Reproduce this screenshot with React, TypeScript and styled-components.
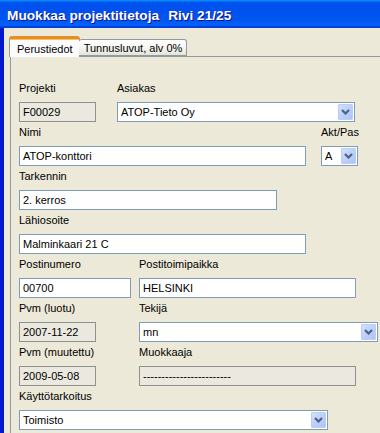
import React from "react";
import styled, { createGlobalStyle, css } from "styled-components";

const GlobalStyle = createGlobalStyle`
  html, body { margin: 0; padding: 0; overflow: hidden; background: #ECE9D8; }
  body { font-family: "Liberation Sans", Arial, sans-serif; }
`;

const Window = styled.div`
  width: 380px;
  height: 433px;
  display: flex;
  flex-direction: column;
  overflow: hidden;
`;

const TitleBar = styled.div`
  height: 28px;
  flex: none;
  display: flex;
  align-items: center;
  gap: 9px;
  padding: 2px 0 0 7px;
  box-sizing: border-box;
  background: linear-gradient(
    180deg,
    #0997ff 0%,
    #0053ee 9%,
    #0050ee 40%,
    #0058f0 75%,
    #0062fa 88%,
    #005bff 92%,
    #003dd7 95%,
    #003dd7 100%
  );
`;

const TitleText = styled.span`
  color: #fff;
  font-family: "Liberation Sans", Arial, sans-serif;
  font-weight: bold;
  font-size: 13.7px;
  white-space: nowrap;
  text-shadow: 1px 1px #0f1089;
`;

const Body = styled.div`
  flex: 1;
  display: flex;
  flex-direction: column;
  background: #ece9d8;
  border-left: 4px solid #0a46d8;
  border-image: linear-gradient(90deg, #0019cf 0%, #1360ef 35%, #0a5ae8 65%, #0845d6 100%) 1;
  padding: 8px 0 0 6px;
  font-size: 11px;
  color: #000;
`;

const TabStrip = styled.div`
  display: flex;
  align-items: flex-end;
  margin-left: -1px;
  position: relative;
  z-index: 1;
  margin-bottom: -1px;
`;

const Tab = styled.div<{ $active?: boolean }>`
  box-sizing: border-box;
  display: flex;
  align-items: center;
  white-space: nowrap;
  border: 1px solid #919b9c;
  border-top-left-radius: 3px;
  border-top-right-radius: 3px;
  ${(p) =>
    p.$active
      ? css`
          height: 21px;
          padding: 2px 6px 0 7px;
          border-bottom: none;
          border-top: 3px solid #e68b2c;
          box-shadow: inset 0 1px 0 #f7c64a;
          background: #fcfcfe;
        `
      : css`
          height: 17px;
          padding: 0 4px 0 5px;
          margin-left: -1px;
          margin-bottom: 1px;
          border-left: none;
          background: linear-gradient(180deg, #ffffff 0%, #f3f3ef 60%, #e4e3da 100%);
        `}
`;

const Panel = styled.div`
  flex: 1;
  border: 1px solid #919b9c;
  border-right: none;
  border-bottom: none;
  padding: 21px 0 0 8px;
  display: flex;
  flex-direction: column;
  background: #ece9d8;
`;

const Row = styled.div<{ $gap?: number }>`
  display: flex;
  gap: ${(p) => p.$gap ?? 0}px;
`;

const Field = styled.div<{ $w: number }>`
  width: ${(p) => p.$w}px;
  flex: none;
  display: flex;
  flex-direction: column;
`;

const Label = styled.div`
  height: 24px;
  box-sizing: border-box;
  padding-top: 3px;
  line-height: 14px;
  white-space: nowrap;
`;

const Box = styled.div<{ $disabled?: boolean }>`
  position: relative;
  height: 20px;
  box-sizing: border-box;
  border: 1px solid ${(p) => (p.$disabled ? "#8f9090" : "#7f9db9")};
  background: ${(p) => (p.$disabled ? "#ebe9df" : "#ffffff")};
  display: flex;
  align-items: center;
  padding-left: 3px;
  white-space: nowrap;
  overflow: hidden;
  line-height: 14px;
`;

const DropButton = styled.div`
  position: absolute;
  right: 1px;
  top: 1px;
  bottom: 1px;
  width: 15px;
  box-sizing: border-box;
  border: 1px solid #bccdf5;
  border-radius: 1px;
  background: linear-gradient(135deg, #d4e1fd 0%, #bfd1fb 45%, #afc4f4 100%);
  display: flex;
  align-items: center;
  justify-content: center;
`;

const Chevron = () => (
  <svg width="9" height="6" viewBox="0 0 9 6">
    <polyline points="1,1 4.5,4.5 8,1" fill="none" stroke="#4d6185" strokeWidth="2.2" />
  </svg>
);

type FieldProps = { label: string; width: number; value: string; disabled?: boolean; select?: boolean };

const FormField = ({ label, width, value, disabled, select }: FieldProps) => (
  <Field $w={width}>
    <Label>{label}</Label>
    <Box $disabled={disabled}>
      {value}
      {select && (
        <DropButton>
          <Chevron />
        </DropButton>
      )}
    </Box>
  </Field>
);

export default function App() {
  return (
    <Window>
      <GlobalStyle />
      <TitleBar>
        <TitleText>Muokkaa projektitietoja</TitleText>
        <TitleText>Rivi 21/25</TitleText>
      </TitleBar>
      <Body>
        <TabStrip>
          <Tab $active>Perustiedot</Tab>
          <Tab>Tunnusluvut, alv 0%</Tab>
        </TabStrip>
        <Panel>
          <Row $gap={21}>
            <FormField label="Projekti" width={77} value="F00029" disabled />
            <FormField label="Asiakas" width={238} value="ATOP-Tieto Oy" select />
          </Row>
          <Row $gap={15}>
            <FormField label="Nimi" width={287} value="ATOP-konttori" />
            <FormField label="Akt/Pas" width={37} value="A" select />
          </Row>
          <Row>
            <FormField label="Tarkennin" width={258} value="2. kerros" />
          </Row>
          <Row>
            <FormField label="Lähiosoite" width={287} value="Malminkaari 21 C" />
          </Row>
          <Row $gap={8}>
            <FormField label="Postinumero" width={112} value="00700" />
            <FormField label="Postitoimipaikka" width={217} value="HELSINKI" />
          </Row>
          <Row $gap={43}>
            <FormField label="Pvm (luotu)" width={77} value="2007-11-22" disabled />
            <FormField label="Tekijä" width={239} value="mn" select />
          </Row>
          <Row $gap={43}>
            <FormField label="Pvm (muutettu)" width={77} value="2009-05-08" disabled />
            <FormField label="Muokkaaja" width={217} value="------------------------" disabled />
          </Row>
          <Row>
            <FormField label="Käyttötarkoitus" width={309} value="Toimisto" select />
          </Row>
        </Panel>
      </Body>
    </Window>
  );
}
